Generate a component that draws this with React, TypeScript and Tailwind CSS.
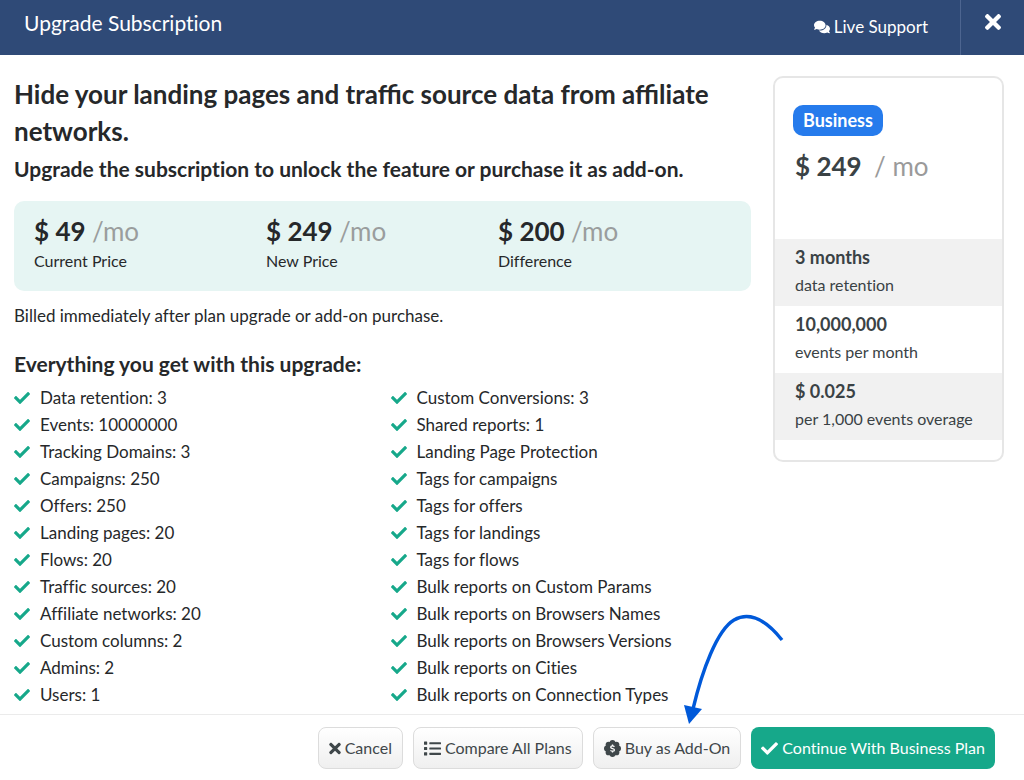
import React from "react";
import { FaCheck, FaComments, FaList, FaTimes } from "react-icons/fa";

const included: string[] = [
  "Data retention: 3",
  "Events: 10000000",
  "Tracking Domains: 3",
  "Campaigns: 250",
  "Offers: 250",
  "Landing pages: 20",
  "Flows: 20",
  "Traffic sources: 20",
  "Affiliate networks: 20",
  "Custom columns: 2",
  "Admins: 2",
  "Users: 1",
];

const unlocked: string[] = [
  "Custom Conversions: 3",
  "Shared reports: 1",
  "Landing Page Protection",
  "Tags for campaigns",
  "Tags for offers",
  "Tags for landings",
  "Tags for flows",
  "Bulk reports on Custom Params",
  "Bulk reports on Browsers Names",
  "Bulk reports on Browsers Versions",
  "Bulk reports on Cities",
  "Bulk reports on Connection Types",
];

const prices = [
  { amount: "$ 49", label: "Current Price" },
  { amount: "$ 249", label: "New Price" },
  { amount: "$ 200", label: "Difference" },
];

const limits = [
  { value: "3 months", label: "data retention" },
  { value: "10,000,000", label: "events per month" },
  { value: "$ 0.025", label: "per 1,000 events overage" },
];

function BadgeDollar() {
  return (
    <svg viewBox="0 0 32 32" className="size-[17px]" aria-hidden="true">
      <g fill="currentColor">
        <circle cx="16" cy="16" r="12.5" />
        <circle cx="16" cy="5.500" r="5.500" />
        <circle cx="16" cy="26.500" r="5.500" />
        <circle cx="5.500" cy="16" r="5.500" />
        <circle cx="26.500" cy="16" r="5.500" />
        <circle cx="8.6" cy="8.6" r="5.500" />
        <circle cx="23.4" cy="8.6" r="5.500" />
        <circle cx="8.6" cy="23.4" r="5.500" />
        <circle cx="23.4" cy="23.4" r="5.500" />
      </g>
      <path
        d="M19.6 12.6c-1-1-2.200-1.400-3.600-1.400-2 0-3.400.9-3.400 2.400 0 3.400 7 1.500 7 5 0 1.500-1.400 2.400-3.600 2.400-1.500 0-2.800-.5-3.800-1.500M16 8.500v2.700M16 21v2.700"
        fill="none"
        stroke="#fff"
        strokeWidth="2.500"
      />
    </svg>
  );
}

function FeatureList({ items }: { items: string[] }) {
  return (
    <ul className="flex-1">
      {items.map((item) => (
        <li key={item} className="flex items-center gap-2.5 text-[17px] leading-[27px]">
          <FaCheck className="size-4 shrink-0 text-[#16a88a]" aria-hidden="true" />
          {item}
        </li>
      ))}
    </ul>
  );
}

function ActionButton({ icon, children }: { icon: React.ReactNode; children: React.ReactNode }) {
  return (
    <button
      type="button"
      className="flex h-[42px] items-center gap-1 rounded-lg border border-[#dcdcdc] bg-linear-to-b from-white to-[#efefef] px-2.5 text-base text-[#3f474a]"
    >
      {icon}
      {children}
    </button>
  );
}

export default function App() {
  return (
    <div className="flex min-h-screen flex-col bg-white font-['Lato',sans-serif] text-[#26282a] [font-variant-ligatures:no-common-ligatures]">
      <header className="flex h-[55px] bg-[#2f4a77] text-white">
        <h1 className="flex-1 pt-[7px] pl-6 text-[21px] leading-8">Upgrade Subscription</h1>
        <a href="#support" className="flex items-center gap-1 pr-8 pb-0.5 text-[17px] leading-none">
          <FaComments className="size-4" aria-hidden="true" />
          Live Support
        </a>
        <button
          type="button"
          aria-label="Close"
          className="flex w-16 justify-center border-l border-[#4d6590] pt-2.5"
        >
          <FaTimes className="h-6 w-4" aria-hidden="true" />
        </button>
      </header>

      <main className="flex flex-1 items-start gap-[22px] pt-[21px] pr-5 pb-1 pl-3.5">
        <section className="min-w-0 flex-1">
          <h2 className="text-[26px] leading-[37px] font-bold [font-variant-ligatures:common-ligatures]">
            Hide your landing pages and traffic source data from affiliate networks.
          </h2>
          <p className="mt-[3px] text-[21px] leading-8 font-bold">
            Upgrade the subscription to unlock the feature or purchase it as add-on.
          </p>
          <dl className="mt-4 flex h-[90px] rounded-[10px] bg-[#e6f5f3] pt-3 pl-5">
            {prices.map((price) => (
              <div key={price.label} className="flex w-[232px] flex-col-reverse justify-end">
                <dt className="text-base leading-6">{price.label}</dt>
                <dd className="text-[26px] leading-9 font-bold">
                  {price.amount} <span className="font-normal text-[#9a9d9d]">/mo</span>
                </dd>
              </div>
            ))}
          </dl>
          <p className="mt-[13px] text-[17px] leading-6">
            Billed immediately after plan upgrade or add-on purchase.
          </p>
          <h3 className="mt-5 text-[21px] leading-8 font-bold">
            Everything you get with this upgrade:
          </h3>
          <div className="mt-1 flex w-full gap-4">
            <FeatureList items={included} />
            <FeatureList items={unlocked} />
          </div>
        </section>

        <aside className="w-[231px] shrink-0 rounded-[10px] border-2 border-[#e6e6e6] pb-5 text-[#3a4245]">
          <div className="h-[161px] px-[18px] pt-[27px]">
            <span className="inline-block rounded-[10px] bg-[#267bec] px-2.5 text-lg leading-[31px] font-bold text-white">
              Business
            </span>
            <p className="mt-3 pl-0.5 text-[26px] leading-9 font-bold">
              $ 249 <span className="ml-1.5 font-normal text-[#9a9a9a]">/ mo</span>
            </p>
          </div>
          <dl>
            {limits.map((limit) => (
              <div
                key={limit.label}
                className="flex h-[67px] flex-col-reverse justify-end px-5 pt-1 odd:bg-[#f1f1f1]"
              >
                <dt className="text-base leading-7">{limit.label}</dt>
                <dd className="text-lg leading-7 font-bold">{limit.value}</dd>
              </div>
            ))}
          </dl>
        </aside>
      </main>

      <footer className="flex justify-end gap-2.5 border-t border-[#ebebeb] pt-3 pr-[29px] pb-[11px]">
        <ActionButton icon={<FaTimes className="h-[17px] w-3" aria-hidden="true" />}>Cancel</ActionButton>
        <ActionButton icon={<FaList className="size-[17px]" aria-hidden="true" />}>
          Compare All Plans
        </ActionButton>
        <ActionButton icon={<BadgeDollar />}>Buy as Add-On</ActionButton>
        <button
          type="button"
          className="flex h-[42px] items-center gap-1 rounded-lg bg-[#16a88a] px-2.5 text-base text-white"
        >
          <FaCheck className="size-[17px]" aria-hidden="true" />
          Continue With Business Plan
        </button>
      </footer>

      <svg
        viewBox="0 0 110 115"
        className="pointer-events-none absolute top-[612px] left-[680px] h-[115px] w-[110px]"
        aria-hidden="true"
      >
        <path
          d="M13 97C22 59 37 18 54 8C70-1 86 8 102 28"
          fill="none"
          stroke="#0059d9"
          strokeWidth="3.400"
        />
        <path d="M4 93l18 4-13 15z" fill="#0059d9" />
      </svg>
    </div>
  );
}
